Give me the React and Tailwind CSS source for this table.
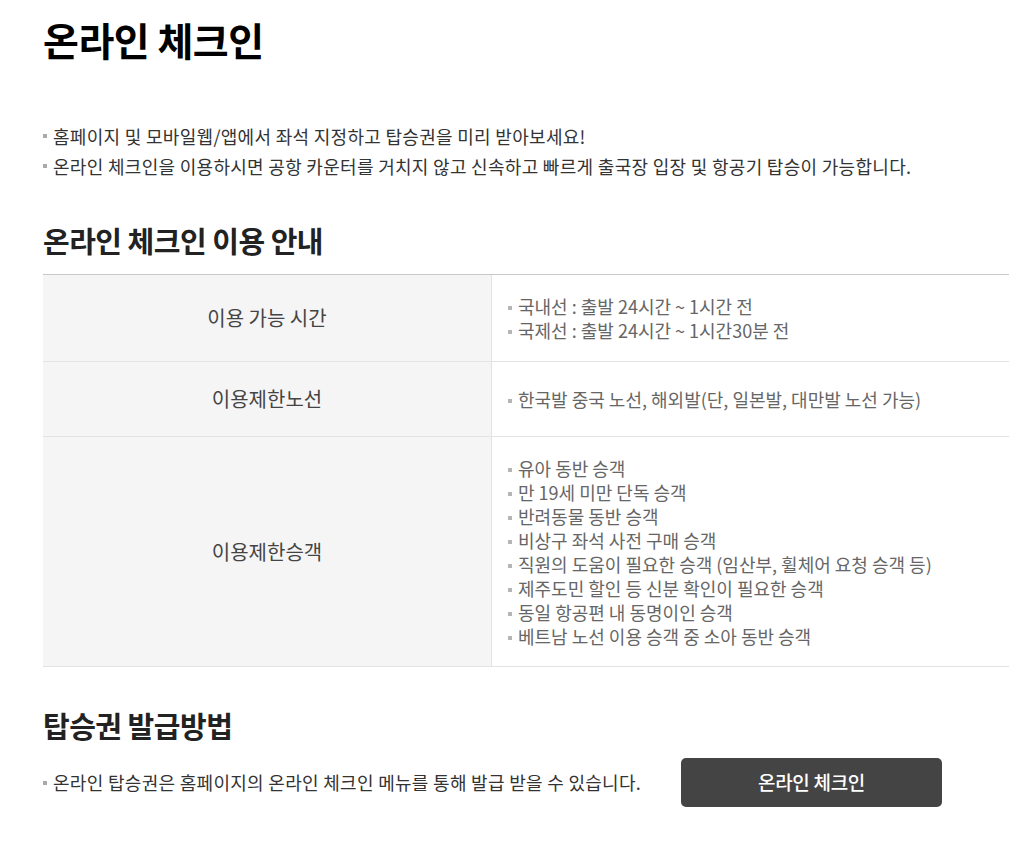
import React from 'react';

const font = { fontFamily: '"Noto Sans CJK KR", "Noto Sans", sans-serif' };

const Dot = ({ className = '' }) => (
  <span className={`mr-[6px] inline-block h-[4px] w-[4px] shrink-0 bg-[#aaa] ${className}`} />
);

const rows = [
  {
    label: '이용 가능 시간',
    h: 'h-[87px]',
    items: ['국내선 : 출발 24시간 ~ 1시간 전', '국제선 : 출발 24시간 ~ 1시간30분 전'],
  },
  {
    label: '이용제한노선',
    h: 'h-[75px]',
    items: ['한국발 중국 노선, 해외발(단, 일본발, 대만발 노선 가능)'],
  },
  {
    label: '이용제한승객',
    h: 'h-[230px]',
    items: [
      '유아 동반 승객',
      '만 19세 미만 단독 승객',
      '반려동물 동반 승객',
      '비상구 좌석 사전 구매 승객',
      '직원의 도움이 필요한 승객 (임산부, 휠체어 요청 승객 등)',
      '제주도민 할인 등 신분 확인이 필요한 승객',
      '동일 항공편 내 동명이인 승객',
      '베트남 노선 이용 승객 중 소아 동반 승객',
    ],
  },
];

export default function App() {
  return (
    <div className="min-h-[841px] bg-white pl-[43px] text-[#222]" style={font}>
      <h1 className="pt-[14px] text-[39px] font-bold leading-[50px] tracking-[-0.5px] text-black">
        온라인 체크인
      </h1>

      <ul className="mt-[57px] text-[18px] leading-[30px] tracking-[0.3px] text-[#333]">
        <li className="flex items-center">
          <Dot />
          홈페이지 및 모바일웹/앱에서 좌석 지정하고 탑승권을 미리 받아보세요!
        </li>
        <li className="flex items-center">
          <Dot />
          온라인 체크인을 이용하시면 공항 카운터를 거치지 않고 신속하고 빠르게 출국장 입장 및 항공기 탑승이 가능합니다.
        </li>
      </ul>

      <h2 className="mt-[39px] text-[29px] font-bold leading-[40px] tracking-[-0.5px] text-[#222]">
        온라인 체크인 이용 안내
      </h2>

      <div className="mt-[14px] border-t border-[#c8c8c8]">
        {rows.map((row) => (
          <div key={row.label} className={`flex border-b border-[#e3e3e3] ${row.h}`}>
            <div className="flex w-[449px] shrink-0 items-center justify-center border-r border-[#e3e3e3] bg-[#f5f5f5] text-[20px] text-[#444]">
              {row.label}
            </div>
            <ul className="flex flex-1 flex-col justify-center pl-[16px] text-[18px] leading-[24px] tracking-[0px] text-[#666]">
              {row.items.map((item) => (
                <li key={item} className="flex items-center">
                  <Dot className="mt-[4px] bg-[#b5b5b5]" />
                  {item}
                </li>
              ))}
            </ul>
          </div>
        ))}
      </div>

      <h2 className="mt-[38px] text-[29px] font-bold leading-[40px] tracking-[-0.5px] text-[#222]">
        탑승권 발급방법
      </h2>

      <div className="mt-[13px] flex items-center">
        <p className="flex w-[638px] items-center text-[18px] tracking-[0.3px] text-[#333]">
          <Dot />
          온라인 탑승권은 홈페이지의 온라인 체크인 메뉴를 통해 발급 받을 수 있습니다.
        </p>
        <button className="flex h-[49px] w-[261px] items-center justify-center rounded-[5px] bg-[#444] text-[19px] font-medium tracking-[-0.3px] text-white">
          온라인 체크인
        </button>
      </div>
    </div>
  );
}
